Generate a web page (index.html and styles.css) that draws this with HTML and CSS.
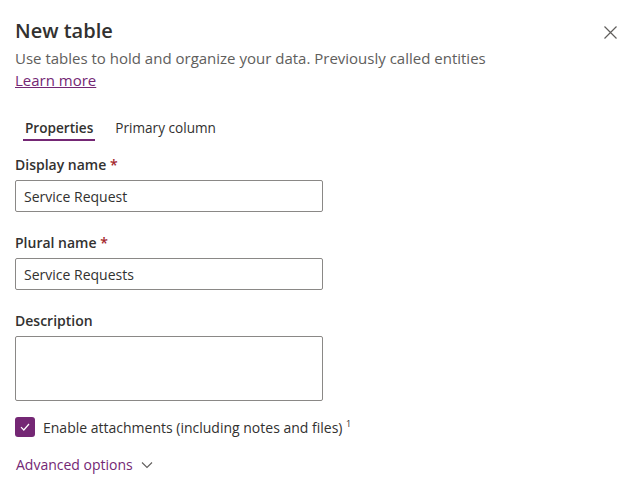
FILE: index.html
```html
<!DOCTYPE html>
<html lang="en">
<head>
  <meta charset="UTF-8">
  <title>New table</title>
  <link rel="stylesheet" href="styles.css">
</head>
<body>
  <div class="panel">
    <div class="header">
      <div class="title">New table</div>
      <button class="close" aria-label="Close">
        <svg width="13" height="13" viewBox="0 0 13 13"><path d="M0.5 0.5L12.5 12.5M12.5 0.5L0.5 12.5" stroke="#605e5c" stroke-width="1.2" fill="none"/></svg>
      </button>
    </div>
    <div class="subtitle">Use tables to hold and organize your data. Previously called entities</div>
    <a class="learn" href="#">Learn more</a>

    <div class="tabs">
      <div class="tab active">Properties</div>
      <div class="tab">Primary column</div>
    </div>

    <div class="field">
      <label>Display name <span class="req">*</span></label>
      <input type="text" value="Service Request">
    </div>
    <div class="field">
      <label>Plural name <span class="req">*</span></label>
      <input type="text" value="Service Requests">
    </div>
    <div class="field">
      <label>Description</label>
      <textarea></textarea>
    </div>

    <div class="check">
      <span class="box">
        <svg width="12" height="12" viewBox="0 0 12 12"><path d="M2 6.2L4.8 9L10 3" stroke="#fff" stroke-width="1.2" fill="none"/></svg>
      </span>
      <span>Enable attachments (including notes and files) <sup>1</sup></span>
    </div>

    <div class="advanced">
      Advanced options
      <svg width="12" height="8" viewBox="0 0 12 8"><path d="M1 1.5L6 6.5L11 1.5" stroke="#605e5c" stroke-width="1.1" fill="none"/></svg>
    </div>
  </div>
</body>
</html>
```

FILE: styles.css
```css
body {
  margin: 0;
  background: #fff;
  font-family: "Open Sans", "Noto Sans", sans-serif;
  color: #323130;
}
.panel {
  padding: 17px 15px 0 15px;
}
.header {
  display: flex;
  justify-content: space-between;
  align-items: center;
}
.title {
  font-size: 20px;
  font-weight: 600;
  line-height: 28px;
}
.close {
  border: none;
  background: none;
  padding: 0;
  margin-right: 7px;
  margin-top: 2px;
  display: flex;
}
.subtitle {
  font-size: 15px;
  color: #605e5c;
  line-height: 22px;
  margin-top: 2px;
}
.learn {
  display: inline-block;
  font-size: 15px;
  color: #742774;
  line-height: 22px;
}
.tabs {
  display: flex;
  gap: 18px;
  margin-top: 23px;
  padding-left: 8px;
}
.tab {
  font-size: 13.6px;
  line-height: 20px;
  padding: 4px 2px 1px;
}
.tab.active {
  font-weight: 600;
  border-bottom: 2px solid #742774;
}
.field {
  margin-top: 14px;
  display: flex;
  flex-direction: column;
}
.field + .field {
  margin-top: 21px;
}
label {
  font-size: 14px;
  font-weight: 600;
  line-height: 20px;
  padding-bottom: 5px;
}
.req {
  color: #a4262c;
}
input, textarea {
  width: 308px;
  box-sizing: border-box;
  border: 1px solid #8a8886;
  border-radius: 2px;
  font-family: inherit;
  font-size: 14px;
  color: #323130;
  padding: 0 8px;
  margin: 0;
}
input {
  height: 32px;
}
textarea {
  height: 65px;
  resize: none;
  display: block;
}
.check {
  display: flex;
  align-items: center;
  gap: 8px;
  margin-top: 16px;
  font-size: 14px;
}
.box {
  width: 20px;
  height: 20px;
  border-radius: 3px;
  background: #742774;
  display: flex;
  align-items: center;
  justify-content: center;
}
sup {
  font-size: 9px;
}
.advanced {
  margin-top: 18px;
  font-size: 14px;
  color: #742774;
  display: flex;
  align-items: center;
  gap: 8px;
  padding-left: 1px;
}
```
